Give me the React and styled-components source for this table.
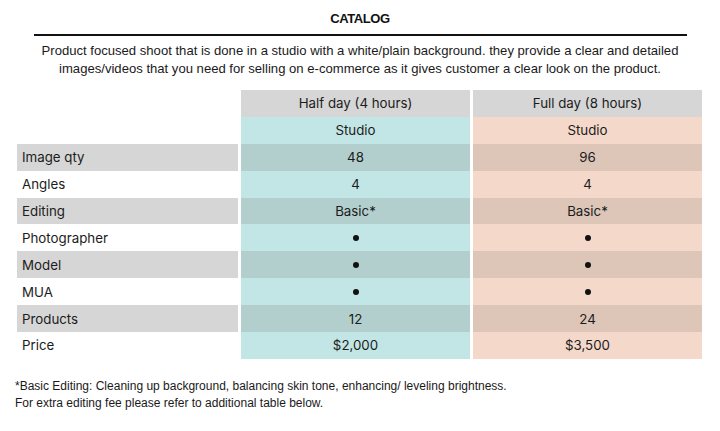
import React from "react";
import styled, { createGlobalStyle } from "styled-components";

const GlobalStyle = createGlobalStyle`
  body {
    margin: 0;
    background: #fff;
    color: #111;
  }
`;

const Page = styled.div`
  width: 720px;
  height: 431px;
  display: flex;
  flex-direction: column;
  align-items: center;
  padding-top: 11px;
  box-sizing: border-box;
`;

const Title = styled.h1`
  margin: 0;
  font-family: "Liberation Sans", Arial, sans-serif;
  font-size: 13px;
  font-weight: 700;
  line-height: 16px;
  letter-spacing: -0.4px;
`;

const Rule = styled.hr`
  width: 653px;
  margin: 7px 0 0 0;
  border: 0;
  border-top: 2px solid #111;
`;

const Intro = styled.p`
  margin: 6px 0 0 0;
  text-align: center;
  font-family: "Liberation Sans", Arial, sans-serif;
  font-size: 13.1px;
  line-height: 18px;
  color: #1a1a1a;
`;

const Table = styled.div`
  margin-top: 12px;
  align-self: flex-start;
  margin-left: 17px;
  display: grid;
  grid-template-columns: 221px 229px 229px;
  column-gap: 3px;
  grid-auto-rows: 26.9px;
  font-family: Inter, "Liberation Sans", sans-serif;
  font-size: 13.3px;
  color: #1c1c1c;
`;

const tones = {
  blank: "transparent",
  head: "#d6d6d6",
  label: "#d6d6d6",
  teal: "#c2e6e5",
  tealDark: "#b2cfcd",
  peach: "#f4d9cb",
  peachDark: "#ddc5b8",
};

const Cell = styled.div`
  display: flex;
  align-items: center;
  justify-content: ${(p) => (p.$left ? "flex-start" : "center")};
  padding-left: ${(p) => (p.$left ? "5px" : "0")};
  background: ${(p) => tones[p.$tone]};
`;

const Dot = styled.span`
  display: inline-block;
  width: 6px;
  height: 6px;
  border-radius: 50%;
  background: #111;
`;

const Footer = styled.div`
  align-self: flex-start;
  margin: 19px 0 0 15px;
  font-family: "Liberation Sans", Arial, sans-serif;
  font-size: 12px;
  line-height: 17px;
  color: #1a1a1a;
`;

const rows = [
  ["Image qty", "48", "96"],
  ["Angles", "4", "4"],
  ["Editing", "Basic*", "Basic*"],
  ["Photographer", "dot", "dot"],
  ["Model", "dot", "dot"],
  ["MUA", "dot", "dot"],
  ["Products", "12", "24"],
  ["Price", "$2,000", "$3,500"],
];

const value = (v) => (v === "dot" ? <Dot /> : v);

const App = () => {
  return (
    <Page>
      <GlobalStyle />
      <Title>CATALOG</Title>
      <Rule />
      <Intro>
        Product focused shoot that is done in a studio with a white/plain background. they provide a clear and detailed
        <br />
        images/videos that you need for selling on e-commerce as it gives customer a clear look on the product.
      </Intro>
      <Table>
        <Cell $tone="blank" />
        <Cell $tone="head">Half day (4 hours)</Cell>
        <Cell $tone="head">Full day (8 hours)</Cell>
        <Cell $tone="blank" />
        <Cell $tone="teal">Studio</Cell>
        <Cell $tone="peach">Studio</Cell>
        {rows.map(([label, half, full], i) => {
          const dark = i % 2 === 0;
          return (
            <React.Fragment key={label}>
              <Cell $left $tone={dark ? "label" : "blank"}>{label}</Cell>
              <Cell $tone={dark ? "tealDark" : "teal"}>{value(half)}</Cell>
              <Cell $tone={dark ? "peachDark" : "peach"}>{value(full)}</Cell>
            </React.Fragment>
          );
        })}
      </Table>
      <Footer>
        *Basic Editing: Cleaning up background, balancing skin tone, enhancing/ leveling brightness.
        <br />
        For extra editing fee please refer to additional table below.
      </Footer>
    </Page>
  );
};

export default App;
